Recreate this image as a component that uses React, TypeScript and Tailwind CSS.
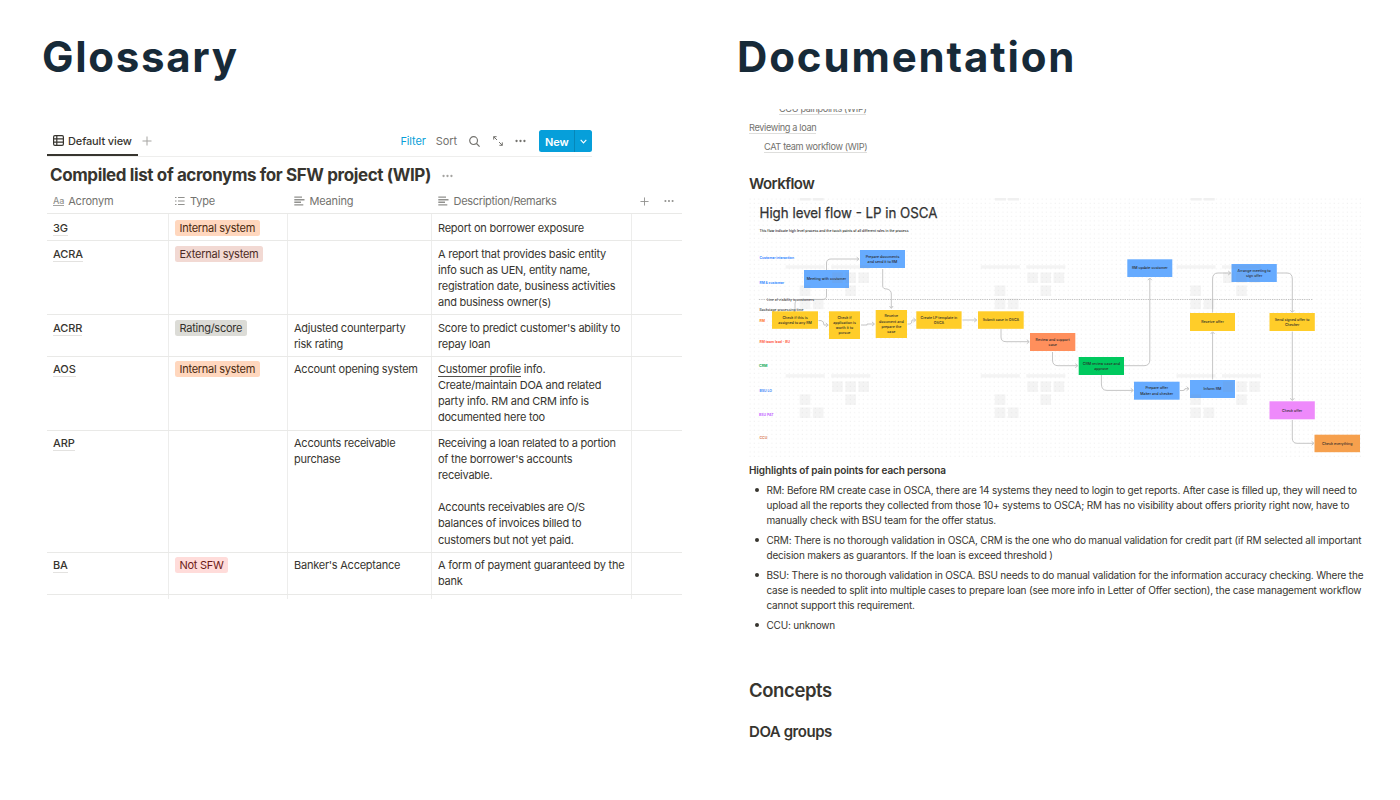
import { ReactNode } from 'react';

const Dots = ({ className }: { className: string }) => (
  <svg viewBox="0 0 12 4" className={className} fill="currentColor">
    <circle cx="1.7" cy="2" r="1.25" />
    <circle cx="6" cy="2" r="1.25" />
    <circle cx="10.3" cy="2" r="1.25" />
  </svg>
);

const Plus = ({ className }: { className: string }) => (
  <svg viewBox="0 0 10 10" className={className} stroke="currentColor" strokeWidth="1">
    <path d="M5 0.5V9.5M0.5 5H9.5" />
  </svg>
);

const TextIcon = () => (
  <svg viewBox="0 0 11 10" className="h-[10px] w-[11px]" stroke="#91918e" strokeWidth="1.4">
    <path d="M0.3 1.1H8M0.3 3.7H10.5M0.3 6.3H7M0.3 8.9H9.3" />
  </svg>
);

const tags = {
  internal: 'bg-[#ffd7be] text-[#49290e]',
  external: 'bg-[#f2d9d3] text-[#4c2b25]',
  rating: 'bg-[#dcdcd7] text-[#32302c]',
  not: 'bg-[#ffdcda] text-[#6d1a15]',
};

const Tag = ({ kind, children }: { kind: keyof typeof tags; children: ReactNode }) => (
  <span className={`inline-block h-[16px] rounded-[2.5px] px-[4.5px] leading-[16px] tracking-[-0.26px] ${tags[kind]}`}>{children}</span>
);

type Row = { h: string; name: string; tag?: [keyof typeof tags, string]; meaning: string[]; desc: ReactNode[] };

const rows: Row[] = [
  { h: 'h-[27px] pt-[6px]', name: '3G', tag: ['internal', 'Internal system'], meaning: [], desc: ['Report on borrower exposure'] },
  { h: 'h-[74px] pt-[5px]', name: 'ACRA', tag: ['external', 'External system'], meaning: [], desc: ['A report that provides basic entity', 'info such as UEN, entity name,', 'registration date, business activities', 'and business owner(s)'] },
  { h: 'h-[42px] pt-[5px]', name: 'ACRR', tag: ['rating', 'Rating/score'], meaning: ['Adjusted counterparty', 'risk rating'], desc: ["Score to predict customer's ability to", 'repay loan'] },
  { h: 'h-[74px] pt-[4px]', name: 'AOS', tag: ['internal', 'Internal system'], meaning: ['Account opening system'], desc: [<><span className="border-b border-[#55534e]">Customer profile</span> info.</>, 'Create/maintain DOA and related', 'party info. RM and CRM info is', 'documented here too'] },
  { h: 'h-[122px] pt-[4px]', name: 'ARP', meaning: ['Accounts receivable', 'purchase'], desc: ['Receiving a loan related to a portion', "of the borrower's accounts", 'receivable.', '\u00a0', 'Accounts receivables are O/S', 'balances of invoices billed to', 'customers but not yet paid.'] },
  { h: 'h-[42px] pt-[4px]', name: 'BA', tag: ['not', 'Not SFW'], meaning: ["Banker's Acceptance"], desc: ['A form of payment guaranteed by the', 'bank'] },
];

const grid = 'grid grid-cols-[121px_119px_144px_200px_51px]';

const ColumnLines = () => (
  <div className={`${grid} absolute inset-0`}>
    <div />
    <div className="border-l border-[#ededec]" />
    <div className="border-l border-[#ededec]" />
    <div className="border-l border-[#ededec]" />
    <div className="border-l border-[#ededec]" />
  </div>
);

const Glossary = () => (
  <section className="w-[694px] pl-[42px]">
    <h1 className="mt-[31px] h-[52px] text-[42px] font-bold leading-[52px] tracking-[1.7px] text-[#172a38]">Glossary</h1>
    <div className="ml-[5px] mt-[43px] w-[635px] text-[11px] tracking-[-0.24px] text-[#37352f]">
      <div className="flex h-[31px] w-[545px] items-start border-b border-[#eeeeed]">
        <div className="flex h-[30px] w-[91px] items-center border-b-2 border-[#37352f] pl-[6px]">
          <svg viewBox="0 0 11 11" className="mr-[4px] h-[11px] w-[11px]" fill="none" stroke="#37352f" strokeWidth="1.2">
            <rect x="0.6" y="0.6" width="9.8" height="9.8" rx="1.3" />
            <path d="M0.6 3.9H10.4M0.6 7.1H10.4M3.8 0.6V10.4" />
          </svg>
          <span className="whitespace-nowrap pt-[2px] font-medium tracking-[-0.13px]">Default view</span>
        </div>
        <div className="flex h-[30px] items-center pl-[4px] text-[#a5a4a1]"><Plus className="h-[10px] w-[10px]" /></div>
        <div className="ml-auto flex h-[30px] items-center whitespace-nowrap text-[#73726e]">
          <span className="tracking-[-0.1px] text-[#0a9fd8]">Filter</span>
          <span className="ml-[10px] tracking-[-0.1px]">Sort</span>
          <svg viewBox="0 0 11 11" className="ml-[12px] h-[11px] w-[11px]" fill="none" stroke="currentColor" strokeWidth="1.2">
            <circle cx="4.6" cy="4.6" r="3.9" /><path d="M7.5 7.5L10.6 10.6" />
          </svg>
          <svg viewBox="0 0 10 10" className="ml-[13px] h-[10px] w-[10px]" fill="none" stroke="currentColor" strokeWidth="1">
            <path d="M3.6 0.7H0.7V3.6M0.7 0.7L4 4M6.4 9.3H9.3V6.4M9.3 9.3L6 6" />
          </svg>
          <Dots className="ml-[12px] h-[4px] w-[11px]" />
          <span className="ml-[13px] flex h-[22px] w-[53px] items-center rounded-[2.5px] bg-[#069fda] text-white">
            <span className="w-[35px] pl-[6px] pt-[2px] font-semibold tracking-[-0.15px]">New</span>
            <span className="flex h-full w-[18px] items-center justify-center border-l border-[#0587b9]">
              <svg viewBox="0 0 8 5" className="h-[5px] w-[7px]" fill="none" stroke="currentColor" strokeWidth="1.3"><path d="M0.8 0.7L4 4L7.2 0.7" /></svg>
            </span>
          </span>
        </div>
      </div>
      <div className="flex h-[37px] items-center pl-[3px]">
        <h2 className="whitespace-nowrap pt-px text-[17px] font-bold tracking-[-0.39px]">Compiled list of acronyms for SFW project (WIP)</h2>
        <Dots className="ml-[11px] h-[4px] w-[11px] text-[#a5a4a1]" />
      </div>
      <div className={`${grid} h-[20px] border-b border-[#e9e9e7] tracking-[-0.18px] text-[#73726e]`}>
        <div className="flex h-[14px] items-center gap-[4px] pl-[6px]">
          <span className="border-b border-[#a5a4a1] text-[9px] font-medium leading-[9px] text-[#91918e]">Aa</span>Acronym
        </div>
        <div className="flex h-[14px] items-center gap-[5px] pl-[7px]">
          <svg viewBox="0 0 10 10" className="h-[10px] w-[10px]" stroke="#91918e" strokeWidth="1.2"><path d="M0 1.5H1.5M0 5H1.5M0 8.5H1.5M3 1.5H9.6M3 5H9.6M3 8.5H9.6" /></svg>Type
        </div>
        <div className="flex h-[14px] items-center gap-[5px] pl-[6.5px]"><TextIcon />Meaning</div>
        <div className="flex h-[14px] items-center gap-[5px] pl-[6.5px] tracking-[-0.3px]"><TextIcon />Description/Remarks</div>
        <div className="flex h-[14px] items-center justify-between pl-[9px] pr-[8px] text-[#91918e]"><Plus className="h-[9px] w-[9px]" /><Dots className="h-[4px] w-[10px]" /></div>
      </div>
      {rows.map((r) => (
        <div key={r.name} className={`${grid} ${r.h} relative border-b border-[#e9e9e7] leading-[16.1px] whitespace-nowrap`}>
          <ColumnLines />
          <div className="pl-[6px]"><span className="border-b border-[#e3e2e0] font-medium tracking-[-0.1px]">{r.name}</span></div>
          <div className="pl-[7px]">{r.tag && <Tag kind={r.tag[0]}>{r.tag[1]}</Tag>}</div>
          <div className="pl-[7px]">{r.meaning.map((m) => <div key={m}>{m}</div>)}</div>
          <div className="pl-[7px]">{r.desc.map((d, i) => <div key={i}>{d}</div>)}</div>
        </div>
      ))}
      <div className="relative h-[4px]"><ColumnLines /></div>
    </div>
  </section>
);

const Y = '#ffcd29';
const B = '#66abff';
type Node = [number, number, number, number, string, string[]];
const nodes: Node[] = [
  [804, 270, 45, 18, B, ['Meeting with customer']],
  [860, 250, 45, 18, B, ['Prepare documents', 'and send it to RM']],
  [1127.3, 259.3, 45, 17.7, B, ['RM update customer']],
  [1231.5, 264, 45.3, 18, B, ['Arrange meeting to', 'sign offer']],
  [772, 311.3, 46, 17.5, Y, ['Check if this is', 'assigned to any RM']],
  [829, 311.3, 31, 27.7, Y, ['Check if', 'application is', 'worth it to', 'pursue']],
  [875.7, 310, 31.3, 28, Y, ['Receive', 'document and', 'prepare the', 'case']],
  [916.3, 311.3, 45.3, 17.5, Y, ['Create LP template in', 'OSCA']],
  [978, 311.3, 45.7, 17.5, Y, ['Submit case in OSCA']],
  [1190, 313, 45, 18, Y, ['Receive offer']],
  [1269.5, 313, 45.3, 18, Y, ['Send signed offer to', 'Checker']],
  [1030, 333, 45.3, 18, '#ff8f5c', ['Review and support', 'case']],
  [1078.7, 357, 45.3, 18, '#00c95e', ['CRM review case and', 'approve']],
  [1134, 381.7, 45.6, 18, B, ['Prepare offer', 'Maker and checker']],
  [1190, 380, 45, 18, B, ['Inform RM']],
  [1269.5, 401.3, 45.3, 18, '#ee8afb', ['Check offer']],
  [1314.5, 434.7, 45.5, 17.5, '#f6a04d', ['Check everything']],
];

const lanes: [number, number, string, string, number][] = [
  [759.5, 259.3, '#3d8bff', 'Customer interaction', 34.5],
  [759.5, 283.7, '#3d8bff', 'RM & customer', 24.5],
  [759.5, 322.3, '#ff7a2b', 'RM', 5.5],
  [759.5, 343.4, '#ff6a4d', 'RM team lead - BU', 30.5],
  [759, 367.4, '#14ae5c', 'CRM', 8.5],
  [759.5, 391.6, '#4b8df8', 'BSU LO', 12.5],
  [759, 415.8, '#c46bff', 'BSU PAT', 14.5],
  [759.5, 438.8, '#d9825b', 'CCU', 7.8],
];

const arrows = [
  'M826.5 270V263Q826.5 259 831 259H859M856.7 257.2L859 259L856.7 260.8',
  'M882.7 269V286Q882.7 289 887 289Q891.3 290 891.3 294V308M889.5 306L891.3 308.5L893.1 306',
  'M826.5 289V296Q826.5 299.5 822 299.5H800Q795 299.5 795 304V311',
  'M818.5 320.5H821Q824 321 824 325H828M825.8 323L828.2 325L825.8 327',
  'M861 325H867V324H874M872 322L874.5 324L872 326',
  'M907.5 324H910Q912 324 912 320H915.5M913.4 318L915.8 320L913.4 322',
  'M962.5 320H976.5M974.2 318L976.8 320L974.2 322',
  'M1001 329V337Q1001 341.7 1006 341.7H1029M1026.8 339.7L1029.2 341.7L1026.8 343.7',
  'M1052.5 352V360Q1052.5 365.7 1058 365.7H1077.5M1075.3 363.7L1077.8 365.7L1075.3 367.7',
  'M1101.4 375V384Q1101.4 390.4 1107 390.4H1133M1130.8 388.4L1133.3 390.4L1130.8 392.4',
  'M1124 365.7H1144Q1149.8 365.7 1149.8 360V279M1147.8 280.2L1149.8 278L1151.8 280.2',
  'M1180 390.5H1183Q1185 390.5 1185 388.7H1189M1186.6 386.7L1189 388.7L1186.6 390.7',
  'M1212.6 379.5V332.5M1210.6 334L1212.6 331.8L1214.6 334',
  'M1212.6 312.5V279Q1212.6 273 1218 273H1230.5M1228.2 271L1230.7 273L1228.2 275',
  'M1277 273H1287Q1292.3 273 1292.3 279V312M1290.3 310.2L1292.3 312.4L1294.3 310.2',
  'M1292.3 331.5V400M1290.3 398.2L1292.3 400.6L1294.3 398.2',
  'M1292.3 420V438Q1292.3 443.3 1297 443.3H1314M1311.6 441.3L1314 443.3L1311.6 445.3',
];

const Ghost = ({ x, y }: { x: number; y: number }) => (
  <g fill="#888" opacity="0.085" transform={`translate(${x} ${y})`}>
    <rect width="39" height="3.3" /><rect x="45.5" width="39" height="3.3" />
    <rect x="46.5" y="7.2" width="10.5" height="10.5" /><rect x="59.7" y="7.2" width="10.5" height="10.5" /><rect x="72.8" y="7.2" width="10.5" height="10.5" />
    <rect x="14" y="20.2" width="10.5" height="10.5" /><rect x="59.7" y="20.2" width="10.5" height="10.5" />
    <rect x="14" y="33.3" width="10.5" height="10.5" /><rect x="27.2" y="33.3" width="10.5" height="10.5" />
  </g>
);

const Flow = () => (
  <svg viewBox="748 197 616 262" className="block h-[262px] w-[616px] font-['Inter',sans-serif] tracking-normal">
    <defs>
      <pattern id="dots" width="4.36" height="4.36" patternUnits="userSpaceOnUse" x="748" y="197">
        <rect x="1.5" y="1.5" width="1" height="1" fill="#ededed" />
      </pattern>
    </defs>
    <rect x="748" y="197" width="616" height="262" fill="url(#dots)" />
    {[785.7, 981, 1176.7].map((x) => (
      <g key={x}>
        <rect x={x + 14} y="198" width="11" height="2.5" fill="#f0f0f0" /><rect x={x + 27} y="198" width="11" height="2.5" fill="#f0f0f0" />
      </g>
    ))}
    <path d="M759 299.5H1313" stroke="#bbb" strokeWidth="0.9" strokeDasharray="1.3 1" />
    <g fill="none" stroke="#c6c6c6" strokeWidth="1">{arrows.map((d) => <path key={d} d={d} />)}</g>
    <text x="759.5" y="217.5" fontSize="14.3" textLength="178" lengthAdjust="spacingAndGlyphs" stroke="#333" strokeWidth="0.25" fill="#333">High level flow - LP in OSCA</text>
    <text x="759.5" y="231.6" fontSize="3.6" textLength="149" lengthAdjust="spacingAndGlyphs" fontWeight="500" fill="#222">This flow indicate high level process and the touch points of all different roles in the process</text>
    <text x="767" y="301" fontSize="3.6" textLength="47" lengthAdjust="spacingAndGlyphs" fontWeight="500" fill="#444">Line of visibility to customers</text>
    <text x="759.5" y="311.4" fontSize="3.6" textLength="44" lengthAdjust="spacingAndGlyphs" fontWeight="500" fill="#333">Backstage processing time</text>
    {lanes.map(([x, y, c, t, w]) => <text key={t} x={x} y={y} fontSize="3.6" fontWeight="700" textLength={w} lengthAdjust="spacingAndGlyphs" fill={c}>{t}</text>)}
    {nodes.map(([x, y, w, h, c, lines]) => (
      <g key={lines.join()}>
        <rect x={x} y={y} width={w} height={h} fill={c} />
        {lines.map((l, i) => (
          <text key={l} x={x + w / 2} y={y + h / 2 + 1.25 + (i - (lines.length - 1) / 2) * 5.2} fontSize="3.6" fontWeight="500" textAnchor="middle" fill="#2a2a2a">{l}</text>
        ))}
      </g>
    ))}
    {[[785.7, 265.3], [980.8, 265.3], [1176.5, 265.3], [785.7, 374.2], [980.8, 374.2], [1176.5, 374.2]].map(([x, y]) => <Ghost key={`${x}-${y}`} x={x} y={y} />)}
  </svg>
);

const points = [
  ['RM: Before RM create case in OSCA, there are 14 systems they need to login to get reports. After case is filled up, they will need to', 'upload all the reports they collected from those 10+ systems to OSCA; RM has no visibility about offers priority right now, have to', 'manually check with BSU team for the offer status.'],
  ['CRM: There is no thorough validation in OSCA, CRM is the one who do manual validation for credit part (if RM selected all important', 'decision makers as guarantors. If the loan is exceed threshold )'],
  ['BSU: There is no thorough validation in OSCA. BSU needs to do manual validation for the information accuracy checking. Where the', 'case is needed to split into multiple cases to prepare loan (see more info in Letter of Offer section), the case management workflow', 'cannot support this requirement.'],
  ['CCU: unknown'],
];

const Documentation = () => (
  <section className="w-[706px] pl-[43px] text-[#37352f]">
    <h1 className="mt-[31px] h-[52px] text-[42px] font-bold leading-[52px] tracking-[1.87px] text-[#172a38]">Documentation</h1>
    <div className="ml-[12px] mt-[26px] whitespace-nowrap">
      <div className="text-[9.2px] leading-[11px] tracking-[-0.36px] text-[#73726e]">
        <div className="flex h-[6px] items-end overflow-hidden pl-[30px]"><span className="h-[12px] border-b border-[#dededc]">CCU painpoints (WIP)</span></div>
        <div className="mt-[7px] flex"><span className="border-b border-[#dededc]">Reviewing a loan</span></div>
        <div className="mt-[7px] flex pl-[15px]"><span className="border-b border-[#dededc]">CAT team workflow (WIP)</span></div>
      </div>
      <h2 className="mt-[21px] h-[20px] text-[15px] font-semibold leading-[20px] tracking-[-0.55px]">Workflow</h2>
      <div className="-ml-px mt-[3px]"><Flow /></div>
      <h3 className="mt-[3px] h-[16px] text-[10px] font-semibold leading-[16px] tracking-[-0.12px]">Highlights of pain points for each persona</h3>
      <ul className="mt-[5px] flex flex-col gap-[5px] text-[10px] leading-[15px] tracking-[-0.195px]">
        {points.map((p) => (
          <li key={p[0]} className="flex">
            <span className="ml-[6px] mr-[7.5px] mt-[5px] h-[4px] w-[4px] rounded-full bg-[#37352f]" />
            <div>{p.map((l) => <div key={l}>{l}</div>)}</div>
          </li>
        ))}
      </ul>
      <h2 className="mt-[44px] h-[26px] text-[18.5px] font-semibold leading-[26px] tracking-[-0.4px]">Concepts</h2>
      <h3 className="mt-[19px] h-[20px] text-[15px] font-semibold leading-[20px] tracking-[-0.45px]">DOA groups</h3>
    </div>
  </section>
);

export default function App() {
  return (
    <main className="flex h-[800px] w-[1400px] overflow-hidden bg-white font-['Inter',sans-serif]">
      <Glossary />
      <Documentation />
    </main>
  );
}
